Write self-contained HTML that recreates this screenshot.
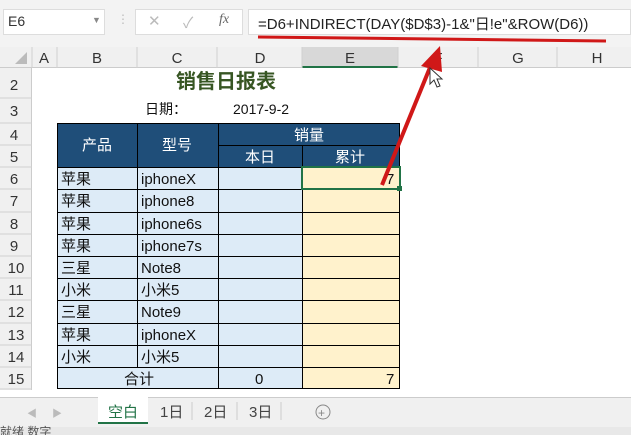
<!DOCTYPE html><html><head><meta charset="utf-8"><style>
*{margin:0;padding:0;box-sizing:border-box}
body{width:631px;height:435px;overflow:hidden;background:#fff;font-family:"Liberation Sans","Noto Sans CJK SC",sans-serif;position:relative}
.a{position:absolute}
.t{font-size:14px;color:#111;white-space:nowrap}
</style></head><body>
<div class="a" style="left:0;top:0;width:631px;height:47px;background:#f3f3f3"></div>
<div class="a" style="left:3px;top:9px;width:102px;height:26px;background:#fff;border:1px solid #ddd"></div>
<div class="a t" style="left:8px;top:13px;font-size:14px;color:#333">E6</div>
<div class="a" style="left:92px;top:15px;font-size:9px;color:#888">▼</div>
<div class="a" style="left:117px;top:12px;font-size:12px;color:#bbb">⋮</div>
<div class="a" style="left:135px;top:9px;width:108px;height:26px;background:#fff;border:1px solid #ddd"></div>
<div class="a" style="left:148px;top:12px;font-size:15px;color:#bbb">✕</div>
<div class="a" style="left:183px;top:12px;font-size:15px;color:#bbb">✓</div>
<div class="a" style="left:219px;top:12px;font-size:14px;color:#666;font-style:italic;font-family:'Liberation Serif',serif">fx</div>
<div class="a" style="left:248px;top:9px;width:383px;height:26px;background:#fff;border:1px solid #ddd"></div>
<div class="a t" style="left:258px;top:13px;font-size:15px;color:#222">=D6+INDIRECT(DAY($D$3)-1&amp;"日!e"&amp;ROW(D6))</div>
<!-- column headers -->
<div class="a" style="left:0;top:47px;width:631px;height:21px;background:#f0f0f0;border-bottom:1px solid #ccc"></div>
<div class="a" style="left:302px;top:47px;width:96px;height:21px;background:#d8d8d8;border-bottom:2px solid #217346"></div>
<div class="a" style="left:0;top:68px;width:32px;height:322px;background:#f0f0f0;border-right:1px solid #ccc"></div>
<div class="a" style="left:0;top:397px;width:631px;height:30px;background:#f0f0f0;border-top:1px solid #ccc"></div>
<div class="a" style="left:0;top:427px;width:631px;height:8px;background:#e8e8e8"></div>
<svg class="a" style="left:0;top:0" width="631" height="435">
<g stroke="#d0d0d0"><line x1="32" y1="47" x2="32" y2="68"/><line x1="57" y1="47" x2="57" y2="68"/><line x1="137" y1="47" x2="137" y2="68"/><line x1="217" y1="47" x2="217" y2="68"/><line x1="302" y1="47" x2="302" y2="68"/><line x1="398" y1="47" x2="398" y2="68"/><line x1="478" y1="47" x2="478" y2="68"/><line x1="557" y1="47" x2="557" y2="68"/>
<line x1="0" y1="98" x2="32" y2="98"/><line x1="0" y1="123" x2="32" y2="123"/><line x1="0" y1="145" x2="32" y2="145"/>
<line x1="0" y1="167" x2="32" y2="167"/><line x1="0" y1="189" x2="32" y2="189"/><line x1="0" y1="212" x2="32" y2="212"/><line x1="0" y1="234" x2="32" y2="234"/><line x1="0" y1="256" x2="32" y2="256"/><line x1="0" y1="278" x2="32" y2="278"/><line x1="0" y1="300" x2="32" y2="300"/><line x1="0" y1="323" x2="32" y2="323"/><line x1="0" y1="345" x2="32" y2="345"/><line x1="0" y1="367" x2="32" y2="367"/><line x1="0" y1="389" x2="32" y2="389"/></g>
<polygon points="27,52 27,64 15,64" fill="#bbb"/>
<g font-size="15" fill="#333" text-anchor="middle" font-family="Liberation Sans,sans-serif">
<text x="44" y="63">A</text><text x="97" y="63">B</text><text x="177" y="63">C</text><text x="260" y="63">D</text><text x="350" y="63">E</text><text x="438" y="63">F</text><text x="518" y="63">G</text><text x="597" y="63">H</text>
<text x="14" y="90">2</text><text x="14" y="116">3</text><text x="14" y="140">4</text><text x="14" y="162">5</text><text x="14" y="184">6</text><text x="14" y="206">7</text><text x="14" y="229">8</text><text x="14" y="251">9</text><text x="16" y="273">10</text><text x="16" y="295">11</text><text x="16" y="317">12</text><text x="16" y="340">13</text><text x="16" y="362">14</text><text x="16" y="384">15</text>
</g>
<!-- table -->
<rect x="57" y="123" width="343" height="44" fill="#1f4e79"/>
<rect x="57" y="167" width="245" height="222" fill="#ddebf7"/>
<rect x="302" y="167" width="98" height="222" fill="#fff2cc"/>
<g stroke="#000" stroke-width="1">
<rect x="57.5" y="123.5" width="342" height="265" fill="none"/>
<line x1="137.5" y1="123" x2="137.5" y2="367"/><line x1="218.5" y1="145" x2="218.5" y2="389"/><line x1="218.5" y1="123" x2="218.5" y2="145"/><line x1="302.5" y1="145" x2="302.5" y2="389"/>
<line x1="218" y1="145.5" x2="400" y2="145.5"/>
<line x1="57" y1="167.5" x2="400" y2="167.5"/><line x1="57" y1="189.5" x2="400" y2="189.5"/><line x1="57" y1="212.5" x2="400" y2="212.5"/><line x1="57" y1="234.5" x2="400" y2="234.5"/><line x1="57" y1="256.5" x2="400" y2="256.5"/><line x1="57" y1="278.5" x2="400" y2="278.5"/><line x1="57" y1="300.5" x2="400" y2="300.5"/><line x1="57" y1="323.5" x2="400" y2="323.5"/><line x1="57" y1="345.5" x2="400" y2="345.5"/><line x1="57" y1="367.5" x2="400" y2="367.5"/>
</g>
<rect x="302" y="167" width="98" height="22" fill="none" stroke="#217346" stroke-width="2"/>
<rect x="397" y="186" width="5" height="5" fill="#217346"/>
<g font-family="Liberation Sans,Noto Sans CJK SC,sans-serif" font-size="15" fill="#fff" text-anchor="middle">
<text x="97" y="150">产品</text><text x="177" y="150">型号</text><text x="309" y="140">销量</text><text x="260" y="162">本日</text><text x="350" y="162">累计</text></g>
<g font-family="Liberation Sans,Noto Sans CJK SC,sans-serif" font-size="15" fill="#111">
<text x="61" y="184">苹果</text><text x="141" y="184">iphoneX</text>
<text x="61" y="206">苹果</text><text x="141" y="206">iphone8</text>
<text x="61" y="229">苹果</text><text x="141" y="229">iphone6s</text>
<text x="61" y="251">苹果</text><text x="141" y="251">iphone7s</text>
<text x="61" y="273">三星</text><text x="141" y="273">Note8</text>
<text x="61" y="295">小米</text><text x="141" y="295">小米5</text>
<text x="61" y="317">三星</text><text x="141" y="317">Note9</text>
<text x="61" y="340">苹果</text><text x="141" y="340">iphoneX</text>
<text x="61" y="362">小米</text><text x="141" y="362">小米5</text>
<text x="124" y="384">合计</text><text x="255" y="384">0</text><text x="386" y="384">7</text><text x="386" y="184">7</text>
<text x="145" y="114" font-size="14">日期：</text><text x="233" y="114" font-size="14">2017-9-2</text>
<text x="176" y="88" font-size="20" font-weight="bold" fill="#375623">销售日报表</text>
</g>
<!-- tabs -->
<g font-family="Liberation Sans,Noto Sans CJK SC,sans-serif" font-size="15" fill="#444">
<rect x="98" y="397" width="50" height="27" fill="#fff"/><rect x="98" y="422" width="50" height="2" fill="#217346"/>
<text x="108" y="417" fill="#217346">空白</text><text x="160" y="417">1日</text><text x="204" y="417">2日</text><text x="249" y="417">3日</text>
<text x="27" y="417" font-size="10" fill="#bbb">◀</text><text x="52" y="417" font-size="10" fill="#bbb">▶</text>
<circle cx="323" cy="412" r="7" fill="none" stroke="#888"/><text x="318" y="417" font-size="12" fill="#888">+</text>
<text x="0" y="436" font-size="12" fill="#555">就绪   数字</text></g>
<g stroke="#ccc"><line x1="192" y1="402" x2="192" y2="420"/><line x1="237" y1="402" x2="237" y2="420"/><line x1="281" y1="402" x2="281" y2="420"/></g>
<!-- annotations -->
<line x1="258" y1="37" x2="606" y2="41" stroke="#d01818" stroke-width="3"/>
<line x1="382" y1="185" x2="431" y2="65" stroke="#d01818" stroke-width="4"/>
<polygon points="440,46 421,66 442,72" fill="#d01818"/>
<path d="M430 68 L430 84 L434 80 L437 87 L440 86 L437 79 L442 79 Z" fill="#fff" stroke="#333" stroke-width="1"/>
</svg>
</body></html>
